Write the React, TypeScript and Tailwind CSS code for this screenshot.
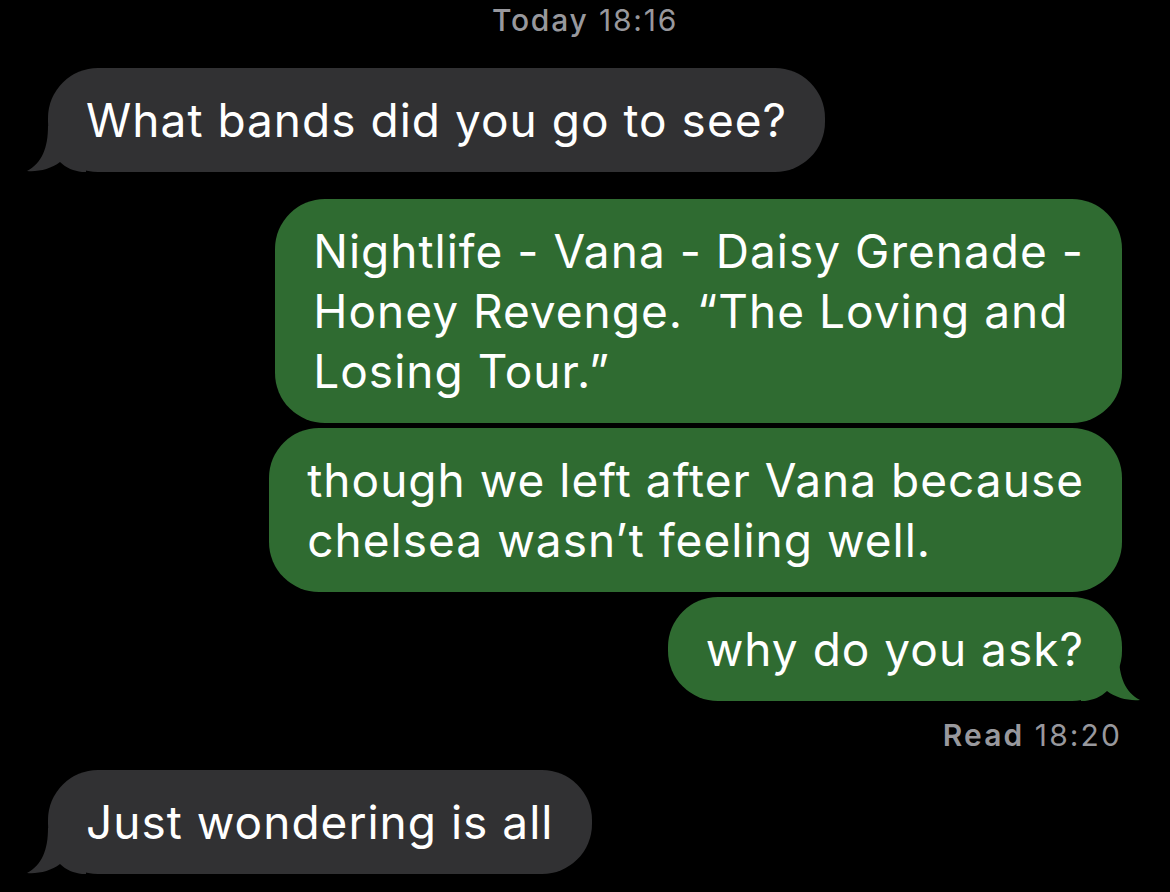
type Message = {
  id: string;
  from: "them" | "me";
  lines: string[];
  tail?: boolean;
};

const messages: Message[] = [
  { id: "m1", from: "them", lines: ["What bands did you go to see?"], tail: true },
  {
    id: "m2",
    from: "me",
    lines: ["Nightlife - Vana - Daisy Grenade -", "Honey Revenge. \u201cThe Loving and", "Losing Tour.\u201d"],
  },
  { id: "m3", from: "me", lines: ["though we left after Vana because", "chelsea wasn\u2019t feeling well."] },
  { id: "m4", from: "me", lines: ["why do you ask?"], tail: true },
];

function Tail({ side, color }: { side: "left" | "right"; color: string }) {
  return (
    <svg
      className={side === "left" ? "absolute bottom-0 left-[-22px]" : "absolute bottom-0 right-[-19px] -scale-x-100"}
      width="60"
      height="46"
      viewBox="0 0 60 46"
      fill={color}
    >
      <path d="M22 0 C22 22 16 37 1 45 C12 46 25 43 34 36 C40 42 48 45 56 46 L60 46 L60 0 Z" />
    </svg>
  );
}

function Bubble({ message }: { message: Message }) {
  const mine = message.from === "me";
  const color = mine ? "#2f6b31" : "#313133";
  return (
    <div className={mine ? "flex justify-end" : "flex justify-start"}>
      <div
        className={
          "relative rounded-[50px] px-[38px] py-[22px] text-[46px] leading-[60px] tracking-[0.022em] whitespace-nowrap text-white " +
          (mine ? "bg-[#2f6b31]" : "bg-[#313133]")
        }
      >
        {message.tail && <Tail side={mine ? "right" : "left"} color={color} />}
        <div className="relative">
          {message.lines.map((line, i) => (
            <div key={i}>{line}</div>
          ))}
        </div>
      </div>
    </div>
  );
}

export default function App() {
  return (
    <main
      className="h-[892px] w-[1170px] overflow-hidden bg-black px-[48px]"
      style={{ fontFamily: "Inter, 'Noto Sans', sans-serif" }}
    >
      <p className="pt-[1px] text-center text-[30px] leading-[38px] tracking-[0.06em] text-[#98989d]">
        <span className="font-medium">Today</span> 18:16
      </p>

      <div className="mt-[29px]">
        <Bubble message={messages[0]} />
      </div>

      <div className="mt-[27px] flex flex-col gap-[5px]">
        {messages.slice(1).map((m) => (
          <Bubble key={m.id} message={m} />
        ))}
      </div>

      <p className="mt-[16px] text-right text-[30px] leading-[36px] tracking-[0.07em] text-[#98989d]">
        <span className="font-semibold">Read</span> 18:20
      </p>

      <div className="mt-[17px]">
        <Bubble message={{ id: "m5", from: "them", lines: ["Just wondering is all"], tail: true }} />
      </div>
    </main>
  );
}
